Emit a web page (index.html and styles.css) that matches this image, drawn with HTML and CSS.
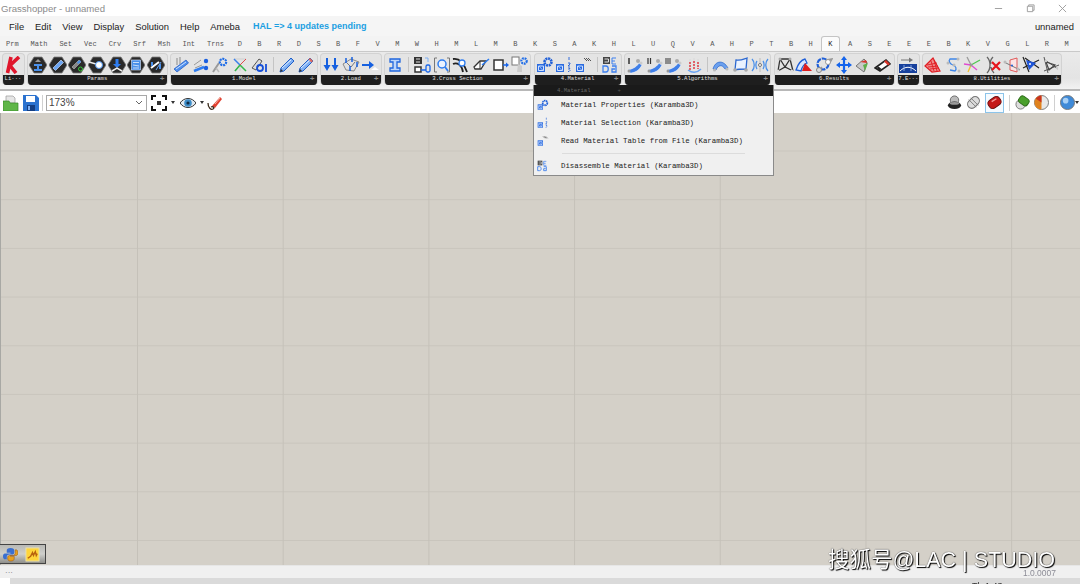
FILE: index.html
```html
<!DOCTYPE html>
<html lang="en">
<head>
<meta charset="utf-8">
<title>Grasshopper - unnamed</title>
<link rel="stylesheet" href="styles.css">
</head>
<body>
<svg class="defs" aria-hidden="true">
  <symbol id="hex" viewBox="0 0 18 18"><polygon points="5,1 13,1 18,9 13,17 5,17 0,9" fill="#2a2a2a" stroke="#808080" stroke-width=".8"/></symbol>
  <symbol id="bar" viewBox="0 0 18 18"><path d="M2 13 14 4l2.500 3L5 16z" fill="#4f90ee" stroke="#1c56c0" stroke-width=".7"/><path d="M4 13 14 6" stroke="#cfe2ff"/></symbol>
  <symbol id="cube" viewBox="0 0 18 18"><rect x="1" y="8" width="8" height="8" fill="#2b6ce0"/><path d="M2.500 10h5v4.500h-5z" fill="none" stroke="#cfe0ff"/><path d="m3 10 4 4.500" stroke="#cfe0ff" stroke-width=".7"/></symbol>
  <symbol id="pencil" viewBox="0 0 18 18"><path d="M2 16l1-4L13 2l3 3L6 15z" fill="#7fb0f4" stroke="#1f5fc8"/><path d="M4 12 13 4" stroke="#e3efff"/><path d="M2 16l1-3 2 2z" fill="#333"/></symbol>
  <symbol id="alg" viewBox="0 0 18 18"><path d="M2 14c3-1 8-2 11-7l3 2c-3 6-8 8-12 8z" fill="#3f7fe8" stroke="#fff" stroke-width=".5"/><circle cx="12" cy="5" r="2" fill="#aaa"/><circle cx="15" cy="7" r="1.500" fill="#ccc"/><circle cx="3" cy="15" r="1.500" fill="#999"/></symbol>
</svg>

<div class="app">
  <header class="titlebar">
    <span class="title">Grasshopper - unnamed</span>
    <div class="winctl">
      <svg class="winbtn" viewBox="0 0 10 10"><path d="M1 5h8" stroke="#999"/></svg>
      <svg class="winbtn" viewBox="0 0 10 10"><path d="M1.500 2.500h6v6h-6zM3 2.500V1h6v6H7.500" fill="none" stroke="#999"/></svg>
      <svg class="winbtn" viewBox="0 0 10 10"><path d="M1 1l8 8M9 1 1 9" stroke="#999"/></svg>
    </div>
  </header>

  <nav class="menubar">
    <span>File</span><span>Edit</span><span>View</span><span>Display</span><span>Solution</span><span>Help</span><span>Ameba</span>
    <span class="hal">HAL =&gt; 4 updates pending</span>
    <span class="docname">unnamed</span>
  </nav>

  <div class="tabs">
    <span class="tab">Prm</span><span class="tab">Math</span><span class="tab">Set</span><span class="tab">Vec</span><span class="tab">Crv</span><span class="tab">Srf</span><span class="tab">Msh</span><span class="tab">Int</span><span class="tab">Trns</span>
    <span class="tab s">D</span><span class="tab s">B</span><span class="tab s">R</span><span class="tab s">D</span><span class="tab s">S</span><span class="tab s">B</span><span class="tab s">F</span><span class="tab s">V</span><span class="tab s">M</span><span class="tab s">W</span><span class="tab s">H</span><span class="tab s">M</span><span class="tab s">L</span><span class="tab s">M</span><span class="tab s">B</span><span class="tab s">K</span><span class="tab s">S</span><span class="tab s">A</span><span class="tab s">K</span><span class="tab s">H</span><span class="tab s">L</span><span class="tab s">U</span><span class="tab s">Q</span><span class="tab s">V</span><span class="tab s">A</span><span class="tab s">H</span><span class="tab s">P</span><span class="tab s">T</span><span class="tab s">B</span><span class="tab s">H</span>
    <span class="tab s active">K</span>
    <span class="tab s">A</span><span class="tab s">S</span><span class="tab s">E</span><span class="tab s">E</span><span class="tab s">E</span><span class="tab s">B</span><span class="tab s">K</span><span class="tab s">V</span><span class="tab s">G</span><span class="tab s">L</span><span class="tab s">R</span><span class="tab s">M</span>
  </div>

  <div class="ribbon">
    <section class="grp g-li">
      <div class="tools">
        <svg class="ic" viewBox="0 0 18 18"><path d="M7 1 3.500 17M15 1 6 9.500 12 17" fill="none" stroke="#e0162c" stroke-width="3.600"/></svg>
      </div>
      <div class="cap">Li···</div>
    </section>

    <section class="grp g-params">
      <div class="tools">
        <svg class="ic" viewBox="0 0 18 18"><use href="#hex"/><path d="M5 8h8v2h-3v3h3v2H5v-2h3v-3H5z" fill="#4a90ea"/><path d="m6 6 3-3 3 3z" fill="#999"/></svg>
        <svg class="ic" viewBox="0 0 18 18"><use href="#hex"/><path d="M4 12 12 4l2.500 2.500-8 8z" fill="#6aa4f2" stroke="#dbe9ff" stroke-width=".6"/></svg>
        <svg class="ic" viewBox="0 0 18 18"><use href="#hex"/><path d="M4 11 11 4l2 2-7 7z" fill="#888" stroke="#ccc" stroke-width=".5"/><path d="M9 6l3-2 1 2-3 2z" fill="#4a90ea"/><circle cx="12.500" cy="13" r="2" fill="none" stroke="#36c936"/></svg>
        <svg class="ic" viewBox="0 0 18 18"><use href="#hex"/><path d="M1 6l7 2" stroke="#eee" stroke-width="1.500"/><circle cx="11" cy="9" r="3.500" fill="#fff" stroke="#4a90ea"/></svg>
        <svg class="ic" viewBox="0 0 18 18"><use href="#hex"/><path d="M7.500 3h3v5H13l-4 4-4-4h2.500z" fill="#2f7df0"/><path d="m4 15 5-3 5 3" fill="none" stroke="#eee" stroke-width="1.500"/></svg>
        <svg class="ic" viewBox="0 0 18 18"><use href="#hex"/><rect x="4.500" y="4" width="9" height="10" fill="#4a90ea" stroke="#dce9ff" stroke-width=".6"/><path d="M6 6.500h6M6 9l6 1M6 12h6" stroke="#fff" stroke-width=".7"/></svg>
        <svg class="ic" viewBox="0 0 18 18"><use href="#hex"/><path d="M4 12 12 6" stroke="#fff" stroke-width="2"/><path d="M5 6v4M13 8v5" stroke="#4a90ea" stroke-width="2"/><path d="M9 14l5-8" stroke="#6aa4f2"/></svg>
      </div>
      <div class="cap">Params<span class="plus">+</span></div>
    </section>

    <section class="grp g-wide">
      <div class="tools">
        <svg class="ic" viewBox="0 0 18 18"><use href="#bar"/><path d="M5 2v7M8 1v7" stroke="#9a9a9a" stroke-width="1.200"/></svg>
        <svg class="ic" viewBox="0 0 18 18"><path d="M2 15 12 11" stroke="#2f7df0" stroke-width="2.500"/><path d="M2 9l7-5M3 12l7-3" stroke="#999"/><circle cx="14" cy="5" r="2.200" fill="#1a5fe0"/><circle cx="14" cy="12" r="2.200" fill="#1a5fe0"/></svg>
        <svg class="ic" viewBox="0 0 18 18"><path d="M2 16 8 7" stroke="#999" stroke-width="2"/><path d="M5 12l3 4" stroke="#bbb" stroke-width="1.500"/><circle cx="12" cy="6" r="3.200" fill="none" stroke="#1f6de8" stroke-width="2.200" stroke-dasharray="2 .8"/></svg>
        <svg class="ic" viewBox="0 0 18 18"><path d="M3 3h12M3 3l6 6 6-6M9 9v6M9 9l-6 6M9 9l6 6" fill="none" stroke="#cfcfcf"/><path d="M3 3l6 6" stroke="#3a80ea" stroke-width="1.500"/><path d="M9 9l-5 6M9 9l6 6" stroke="#35b84a" stroke-width="1.500"/><path d="M9 9 15 3" stroke="#e04b4b"/></svg>
        <svg class="ic" viewBox="0 0 18 18"><path d="M1 12 8 3l3 2-6 9z" fill="#ddd" stroke="#555"/><circle cx="9" cy="12" r="3" fill="none" stroke="#1750d8" stroke-width="1.800"/><path d="M15 8v8" stroke="#1750d8" stroke-width="1.800"/></svg>
        <i class="sep"></i>
        <svg class="ic" viewBox="0 0 18 18"><use href="#pencil"/></svg>
        <svg class="ic" viewBox="0 0 18 18"><use href="#pencil"/><path d="M13 2l3 3-1.500 1.500-3-3z" fill="#e56a5a"/></svg>
      </div>
      <div class="cap">1.Model<span class="plus">+</span></div>
    </section>

    <section class="grp g-load">
      <div class="tools">
        <svg class="ic" viewBox="0 0 18 18"><path d="M5 2v8M13 2v8" stroke="#1660e0" stroke-width="2"/><path d="M1.500 9h7L5 15zM9.500 9h7L13 15z" fill="#1660e0"/></svg>
        <svg class="ic" viewBox="0 0 18 18"><path d="M1 8l8-5 8 3-5 9-8-1z" fill="#e2e2e2" stroke="#888"/><path d="M5 7l4 4 4-5" fill="none" stroke="#777"/><path d="M4 2v5M10 1v5M15 6v5M8 10v5" stroke="#1660e0" stroke-width="1.500"/></svg>
        <svg class="ic" viewBox="0 0 18 18"><path d="M1 9h8" stroke="#1660e0" stroke-width="2"/><path d="M8 5l5 4-5 4z" fill="#1660e0"/><path d="M10 14l4-3 4 3z" fill="#fff"/></svg>
      </div>
      <div class="cap">2.Load<span class="plus">+</span></div>
    </section>

    <section class="grp g-wide2">
      <div class="tools">
        <svg class="ic" viewBox="0 0 18 18"><path d="M4 3h10v3h-3v6h3v3H4v-3h3V6H4z" fill="#bcd6fb" stroke="#1f66dd" stroke-width="1.300"/></svg>
        <i class="sep"></i>
        <svg class="ic" viewBox="0 0 18 18"><rect x="1" y="1" width="8" height="7" fill="#333"/><path d="M3 3h4M3 6h4" stroke="#ddd"/><rect x="2" y="11" width="6" height="5" fill="#fff" stroke="#333" stroke-width="1.500"/><path d="M8 14h5" stroke="#1a66e8" stroke-width="1.500"/><rect x="13" y="9" width="4" height="7" rx="1.500" fill="none" stroke="#1a66e8" stroke-width="1.300"/><path d="M12 2h3v4" fill="none" stroke="#7fb0f4"/></svg>
        <svg class="ic" viewBox="0 0 18 18"><path d="M4 2H1.500v14H4M14 2h2.500v14H14" fill="none" stroke="#777"/><circle cx="9" cy="8" r="4" fill="#eaf2ff" stroke="#2f7df0" stroke-width="1.500"/><path d="m12 11 3 4" stroke="#2f7df0" stroke-width="1.800"/></svg>
        <svg class="ic" viewBox="0 0 18 18"><path d="M1 3c5-1 10 2 14 13M1 8c4-2 9 1 10 8" fill="none" stroke="#222" stroke-width="1.800"/><circle cx="10" cy="7" r="3" fill="#fff" stroke="#2f7df0" stroke-width="1.300"/></svg>
        <svg class="ic" viewBox="0 0 18 18"><path d="M2 11 8 5h6l-5 8H3z" fill="#fff" stroke="#333" stroke-width="1.300"/><path d="M8 5v8" stroke="#333"/><path d="m10 9 7-6" stroke="#2f7df0" stroke-width="1.600"/></svg>
        <svg class="ic" viewBox="0 0 18 18"><rect x="2" y="4" width="9" height="10" fill="#fff" stroke="#333" stroke-width="1.500"/><path d="M11 9h4" stroke="#1a66e8" stroke-width="1.500"/><path d="M14 6.500 17 9l-3 2.500z" fill="#1a66e8"/></svg>
        <svg class="ic" viewBox="0 0 18 18"><rect x="1" y="1" width="7" height="8" fill="#fff" stroke="#777"/><path d="M7 8l4 2v6H6z" fill="#ccc"/><circle cx="13" cy="5" r="2.700" fill="none" stroke="#1f6de8" stroke-width="2.200" stroke-dasharray="1.800 .8"/></svg>
      </div>
      <div class="cap">3.Cross Section<span class="plus">+</span></div>
    </section>

    <section class="grp g-mat">
      <div class="tools">
        <svg class="ic" viewBox="0 0 18 18"><use href="#cube"/><circle cx="12" cy="6" r="3.500" fill="none" stroke="#1f5fd8" stroke-width="2.600" stroke-dasharray="2 .7"/></svg>
        <svg class="ic" viewBox="0 0 18 18"><use href="#cube"/><path d="M14 1v3M13 7h2v1l-2 2h2M13 12h2l-1 1.500 1 1-1 1h-1" fill="none" stroke="#1f5fd8" stroke-width=".9"/></svg>
        <svg class="ic" viewBox="0 0 18 18"><use href="#cube"/><path d="m9 2 3 3M11 2l3 3M13 2l3 3" stroke="#555"/></svg>
        <i class="sep"></i>
        <svg class="ic" viewBox="0 0 18 18"><rect x="1" y="1" width="7" height="7" fill="#444"/><path d="M2.500 3h4v3h-4" fill="none" stroke="#ddd"/><path d="M10 2v6M10 2h4M10 5h3M10 8h4" fill="none" stroke="#3e80ee"/><path d="M1 10h3c3 0 3 6 0 6H1zM10 10h4v6h-4v-3h3" fill="none" stroke="#3e80ee" stroke-width="1.300"/></svg>
      </div>
      <div class="cap">4.Material<span class="plus">+</span></div>
    </section>

    <section class="grp g-wide2">
      <div class="tools">
        <svg class="ic" viewBox="0 0 18 18"><use href="#alg"/><path d="M3 2v6" stroke="#333" stroke-width="1.500"/></svg>
        <svg class="ic" viewBox="0 0 18 18"><use href="#alg"/><path d="M2 2v6M4.500 2v6" stroke="#333" stroke-width="1.200"/></svg>
        <svg class="ic" viewBox="0 0 18 18"><use href="#alg"/><path d="M1 2v6M3 2v6M5 2v6" stroke="#333"/></svg>
        <svg class="ic" viewBox="0 0 18 18"><path d="M3 14c4 3 9 3 13-1" fill="none" stroke="#6aa4f2" stroke-width="1.500"/><path d="M5 3v9M9 2v9M13 3v9" stroke="#ddd" stroke-width="1.500"/><path d="M5 6v8M9 5v8M13 6v7" stroke="#e0202a" stroke-width="1.300" stroke-dasharray="2 1"/></svg>
        <i class="sep"></i>
        <svg class="ic" viewBox="0 0 18 18"><path d="M1 13C3 5 11 3 16 12l-3 1C10 8 6 9 4 14z" fill="#6ba0ee" stroke="#2461c9" stroke-width=".7"/><circle cx="2.500" cy="14" r="1.500" fill="#bbb"/><circle cx="15" cy="13" r="1.500" fill="#bbb"/></svg>
        <svg class="ic" viewBox="0 0 18 18"><path d="M4 4c4 1 8-1 11-2l-1 11c-3 0-8 0-11 1z" fill="#eaf2ff" stroke="#2c68d0" stroke-width="1.300"/><circle cx="3" cy="14" r="1.800" fill="#aaa"/><circle cx="14" cy="14" r="1.800" fill="#aaa"/></svg>
        <svg class="ic" viewBox="0 0 18 18"><path d="M1 3c3 3 3 9 0 12M17 3c-3 3-3 9 0 12M6 5c-1.500 2-1.500 6 0 8M12 5c1.500 2 1.500 6 0 8" fill="none" stroke="#4a90ea" stroke-width="1.300"/><path d="M9 2v14" stroke="#bbb"/><circle cx="9" cy="9" r="1.500" fill="#fff" stroke="#777"/></svg>
      </div>
      <div class="cap">5.Algorithms<span class="plus">+</span></div>
    </section>

    <section class="grp g-res">
      <div class="tools">
        <svg class="ic" viewBox="0 0 18 18"><path d="M4 3h10M4 3l-2 12M14 3l3 12M4 3l5 8 5-8M2 15l7-4 8 4" fill="none" stroke="#333" stroke-width="1.300"/><circle cx="4" cy="3" r="1.500" fill="#aaa"/><circle cx="14" cy="3" r="1.500" fill="#aaa"/><circle cx="2" cy="15" r="1.500" fill="#ddd"/><circle cx="16" cy="15" r="1.500" fill="#ddd"/></svg>
        <svg class="ic" viewBox="0 0 18 18"><path d="M1 14C3 8 6 4 10 3l2 4c-3 1-5 4-6 8z" fill="#d8e7ff" stroke="#1f5fd8" stroke-width="1.300"/><path d="M10 7l7 8H7z" fill="#e01e1e"/></svg>
        <svg class="ic" viewBox="0 0 18 18"><circle cx="8" cy="8" r="5.500" fill="none" stroke="#1f5fd8" stroke-width="2.200" stroke-dasharray="5 1"/><path d="m11 4 6-1-3 5M3 15l4-4" stroke="#999" stroke-width="1.500" fill="none"/><circle cx="13" cy="6" r="2.500" fill="#fff" stroke="#999"/><circle cx="4" cy="14" r="2.500" fill="#ddd" stroke="#888"/></svg>
        <svg class="ic" viewBox="0 0 18 18"><path d="M9 3v12M3 9h12" stroke="#1464ec" stroke-width="2.200"/><path d="M9 0l3 4H6zM9 18l3-4H6zM1 9l4-3v6zM17 9l-4-3v6z" fill="#1464ec"/></svg>
        <svg class="ic" viewBox="0 0 18 18"><path d="M2 10l8-7 3 3-3 10z" fill="#c9c9c9" stroke="#777"/><path d="M9 9l5-2-3 8z" fill="#5eb04a"/><path d="M6 6l6-2 1 3z" fill="#d9362c"/></svg>
        <svg class="ic" viewBox="0 0 18 18"><path d="M1 12 12 4l4 4-10 7z" fill="#fff" stroke="#222" stroke-width="1.600"/><path d="M2.500 12l3 2.500 2-1.500-3-2.500z" fill="#222"/><path d="M12 4l4 4-2 1.500-4-4z" fill="#d9362c"/></svg>
      </div>
      <div class="cap">6.Results<span class="plus">+</span></div>
    </section>

    <section class="grp g-e">
      <div class="tools">
        <svg class="ic" viewBox="0 0 18 18"><path d="M2 4h10" stroke="#777"/><path d="M10 1.500 14 4l-4 2.500z" fill="#777"/><rect x="0" y="8" width="18" height="9" fill="#17409c"/><path d="M1 15c5-5 11-5 16 0" fill="none" stroke="#fff"/><path d="M5 9v6M12 9v6" stroke="#9ab8ee" stroke-width=".8"/></svg>
      </div>
      <div class="cap">7.E···</div>
    </section>

    <section class="grp g-util">
      <div class="tools">
        <svg class="ic" viewBox="0 0 18 18"><path d="M1 10 9 2l7 13-8 1z" fill="#f08a8a" stroke="#e01e24" stroke-width="1.200"/><path d="M3 9l10-2M4 11l10-1M6 13l9-1M7 5l3 10M10 4l3 11" stroke="#e01e24" stroke-width=".9"/></svg>
        <svg class="ic" viewBox="0 0 18 18"><path d="M14 3H6c-2 2 0 5 3 6 3 1 4 4 2 6L6 14" fill="none" stroke="#3f86e8" stroke-width="1.300"/><circle cx="14" cy="3" r="1.500" fill="#bbb"/><circle cx="4" cy="7" r="1.500" fill="#bbb"/><circle cx="10" cy="9" r="1.500" fill="#bbb"/><circle cx="15" cy="15" r="1.500" fill="#bbb"/></svg>
        <svg class="ic" viewBox="0 0 18 18"><path d="M8 9 4 1" stroke="#999" stroke-width="1.300"/><path d="M8 9l9-5" stroke="#4ec850" stroke-width="1.300"/><path d="M8 9l6 5" stroke="#e04bd0" stroke-width="1.300"/><path d="M8 9 1 8" stroke="#e04bd0" stroke-width="1.300"/><path d="M8 9l-3 7" stroke="#f0c030" stroke-width="1.300"/><circle cx="8" cy="9" r="1.500" fill="#999"/></svg>
        <svg class="ic" viewBox="0 0 18 18"><path d="M4 1c4 4 4 12 0 16M10 1c-3 3-3 5-2 7M8 11c0 2 1 4 3 6" fill="none" stroke="#666" stroke-width="1.300"/><path d="m9 6 8 8m0-8-8 8" stroke="#e6141c" stroke-width="2.200"/></svg>
        <svg class="ic" viewBox="0 0 18 18"><path d="M7 4l7-2v14l-7-2z" fill="#fbe4e4" stroke="#e05a5a"/><path d="M1 6l16 8" stroke="#777"/><circle cx="2" cy="6" r="1.500" fill="#bbb"/><circle cx="15" cy="13" r="1.500" fill="#bbb"/><circle cx="9" cy="9.500" r="1" fill="#1f5fd8"/></svg>
        <svg class="ic" viewBox="0 0 18 18"><path d="M1 1l6 15M17 4 1 12M3 2l14 10" stroke="#222" stroke-width="1.200"/><path d="M4 4l10 3-7 7z" fill="#1f55d8"/><circle cx="8" cy="8" r="1" fill="#fff"/></svg>
        <svg class="ic" viewBox="0 0 18 18"><path d="M2 1l4 16M2 15l15-6M3 4l13 9" stroke="#555" stroke-width="1"/><path d="M4 6l9 3-6 5z" fill="none" stroke="#444" stroke-width="1.200"/><circle cx="4" cy="5" r="1.200" fill="#ccc"/><circle cx="15" cy="12" r="1.200" fill="#ccc"/></svg>
      </div>
      <div class="cap">8.Utilities<span class="plus">+</span></div>
    </section>
  </div>

  <div class="toolbar">
    <svg class="tb" viewBox="0 0 16 16"><path d="M3 1h7l2 2v5H3z" fill="#e6e6e6" stroke="#999" stroke-width=".7"/><path d="M0 6h6l1 2h8v8H0z" fill="#5fb648" stroke="#3b8a2c" stroke-width=".7"/></svg>
    <svg class="tb" viewBox="0 0 16 16"><path d="M0 0h13l3 3v13H0z" fill="#2b72cf"/><rect x="3" y="1" width="9" height="6" fill="#fff"/><rect x="4" y="10" width="8" height="6" fill="#143e82"/><rect x="5" y="11" width="2" height="4" fill="#7fb0f4"/></svg>
    <i class="tsep"></i>
    <div class="combo"><span>173%</span>
      <svg class="chev" viewBox="0 0 8 5"><path d="m1 1 3 3 3-3" fill="none" stroke="#666"/></svg>
    </div>
    <svg class="tb cap-ic" viewBox="0 0 16 16"><path d="M1 5V1h4M11 1h4v4M15 11v4h-4M5 15H1v-4" fill="none" stroke="#111" stroke-width="2"/><rect x="6" y="6" width="4" height="4" fill="#333"/></svg>
    <i class="drop"></i>
    <svg class="tb eye" viewBox="0 0 16 16"><path d="M0 8c4-6 12-6 16 0-4 6-12 6-16 0z" fill="#dfe8f0" stroke="#333"/><circle cx="8" cy="8" r="3.800" fill="#3c8cc8"/><circle cx="8" cy="8" r="1.600" fill="#102a44"/></svg>
    <i class="drop"></i>
    <svg class="tb pen" viewBox="0 0 16 16"><path d="M5 11 13 2l2 2-7 9z" fill="#e04030"/><path d="M8 9l5-6" stroke="#f6b0a0"/><path d="M1 8c0 5 3 7 5 6 2-1 0-3-2-2" fill="none" stroke="#3a2a1a" stroke-width="1.300"/></svg>
    <div class="tright">
      <svg class="tb" viewBox="0 0 16 16"><ellipse cx="8" cy="5.500" rx="4.500" ry="4.500" fill="#bbb" stroke="#666"/><ellipse cx="8" cy="11" rx="7" ry="4" fill="#222"/><ellipse cx="8" cy="9" rx="5" ry="1.500" fill="#999"/></svg>
      <svg class="tb" viewBox="0 0 16 16"><rect x="1" y="3.500" width="14" height="9" rx="4.500" transform="rotate(-45 8 8)" fill="#ddd" stroke="#777" stroke-width="1.200"/><path d="M5 3l8 8M3 5l8 8" stroke="#777"/></svg>
      <span class="selected"><svg class="tb" viewBox="0 0 16 16"><rect x="1" y="3" width="14" height="10" rx="4" transform="rotate(-35 8 8)" fill="#c41a1a" stroke="#611"/><path d="M5 7l5-3" stroke="#f59a9a" stroke-width="1.500"/></svg></span>
      <i class="tsep"></i>
      <svg class="tb" viewBox="0 0 16 16"><circle cx="6" cy="10" r="5" fill="#ddd" stroke="#777"/><rect x="4" y="2" width="11" height="8" rx="3" transform="rotate(35 9 6)" fill="#4aa02c" stroke="#2c6b18"/></svg>
      <svg class="tb" viewBox="0 0 16 16"><circle cx="8" cy="8" r="7.500" fill="#e8e8e8" stroke="#777"/><path d="M8 .5A7.500 7.500 0 0 0 8 15.500z" fill="#e0821e"/><path d="M8 .5A7.500 7.500 0 0 0 2 4l6 4z" fill="#c8321e"/></svg>
      <i class="tsep"></i>
      <svg class="tb" viewBox="0 0 16 16"><circle cx="8" cy="8" r="7.500" fill="#3f8ad8" stroke="#777"/><circle cx="6" cy="6" r="3" fill="#a8d0f6"/></svg>
      <i class="drop"></i>
    </div>
  </div>

  <main class="canvas">
    <div class="scripts">
      <svg class="sc" viewBox="0 0 16 16"><path d="M8 1c-3 0-4 1-4 3v2h4v1H2C1 7 0 8 0 10s1 3 2 3h2v-2c0-2 1-3 3-3h3c1 0 2-1 2-2V4c0-2-1-3-4-3z" fill="#3a6fd0"/><path d="M8 15c3 0 4-1 4-3v-2H8V9h6c1 0 2-1 2-3s-1-3-2-3h-1v3c0 2-1 3-3 3H7c-1 0-2 1-2 2v1c0 2 1 3 3 3z" fill="#e8a01e" stroke="#8a4a10" stroke-width=".5"/></svg>
      <svg class="sc" viewBox="0 0 16 16"><rect x="1" y="1" width="14" height="14" fill="#ffd53a" stroke="#e8e0b0"/><path d="M3 12l3-2 2-4 1 3 2-4 1 4 1-2" fill="none" stroke="#b8620e" stroke-width="1.500"/></svg>
    </div>
  </main>

  <div class="status">···</div>
  <div class="strip"><span>Th 1:43</span></div>

  <div class="popup">
    <div class="pop-head"><span>4.Material</span><span class="pop-plus">+</span></div>
    <div class="pop-item">
      <svg class="pi" viewBox="0 0 18 18"><use href="#cube"/><circle cx="12" cy="6" r="3.500" fill="none" stroke="#1f5fd8" stroke-width="2.600" stroke-dasharray="2 .7"/></svg>
      <span>Material Properties (Karamba3D)</span>
    </div>
    <div class="pop-item">
      <svg class="pi" viewBox="0 0 18 18"><use href="#cube"/><path d="M14 1v3M13 7h2v1l-2 2h2M13 12h2l-1 1.500 1 1-1 1h-1" fill="none" stroke="#1f5fd8" stroke-width=".9"/></svg>
      <span>Material Selection (Karamba3D)</span>
    </div>
    <div class="pop-item">
      <svg class="pi" viewBox="0 0 18 18"><use href="#cube"/><path d="m9 2 3 3M11 2l3 3M13 2l3 3" stroke="#555"/></svg>
      <span>Read Material Table from File (Karamba3D)</span>
    </div>
    <div class="pop-sep"></div>
    <div class="pop-item">
      <svg class="pi" viewBox="0 0 18 18"><rect x="1" y="1" width="7" height="7" fill="#444"/><path d="M2.500 3h4v3h-4" fill="none" stroke="#ddd"/><path d="M10 2v6M10 2h4M10 5h3M10 8h4" fill="none" stroke="#3e80ee"/><path d="M1 10h3c3 0 3 6 0 6H1zM10 10h4v6h-4v-3h3" fill="none" stroke="#3e80ee" stroke-width="1.300"/></svg>
      <span>Disassemble Material (Karamba3D)</span>
    </div>
  </div>

  <div class="version">1.0.0007</div>
</div>
<div class="watermark">搜狐号@LAC | STUDIO</div>
</body>
</html>
```
FILE: styles.css
```css
* { box-sizing: border-box; }
html, body { margin: 0; height: 100%; overflow: hidden; background: #fff; }
body { position: relative; font-family: "Liberation Sans", "Noto Sans", sans-serif; }
.defs { position: absolute; width: 0; height: 0; }

.app {
  position: relative;
  width: 1080px;
  height: 584px;
  display: flex;
  flex-direction: column;
  overflow: hidden;
  filter: blur(.45px);
}

/* title bar */
.titlebar {
  height: 16px;
  flex: none;
  display: flex;
  align-items: center;
  justify-content: space-between;
  background: #fff;
  padding-left: 1px;
}
.title { font-size: 9.6px; color: #8c8c8c; }
.winctl { display: flex; align-items: center; gap: 23px; padding-right: 13px; }
.winbtn { width: 9px; height: 9px; }

/* menu */
.menubar {
  height: 20px;
  flex: none;
  display: flex;
  align-items: center;
  gap: 11px;
  padding: 0 6px 0 9px;
  background: #f5f5f5;
  font-size: 9.4px;
  color: #222;
}
.hal { margin-left: 2px; color: #1c9fe2; font-size: 9px; font-weight: 700; }
.docname { margin-left: auto; }

/* tabs */
.tabs {
  height: 15px;
  flex: none;
  display: flex;
  background: #f3f3f3;
  font-family: "Liberation Mono", monospace;
  font-size: 7px;
  color: #555;
}
.tab { padding: 0 6px; line-height: 16px; }
.tab.s { width: 19.7px; padding: 0; text-align: center; }
.tab.active {
  background: #fbfbfb;
  border: 1px solid #c4c4c4;
  border-bottom: 0;
  border-radius: 3px 3px 0 0;
  color: #222;
  line-height: 14px;
}

/* ribbon */
.ribbon {
  height: 40px;
  flex: none;
  display: flex;
  gap: 2.5px;
  padding: 1px 0 0 1.5px;
  background: linear-gradient(#eaeaea, #e4e4e4 70%, #f2f2f2);
  border-top: 1px solid #c9c9c9;
  border-bottom: 2px solid #b8b8b8;
}
.grp {
  height: 32px;
  flex: none;
  display: flex;
  flex-direction: column;
  background: #e4e4e4;
  border: 1px solid #d2d2d2;
  border-bottom: 0;
  border-radius: 4px;
  overflow: hidden;
}
.g-li { width: 23px; }
.g-params { width: 140.5px; }
.g-wide { width: 147.5px; }
.g-load { width: 61.5px; }
.g-wide2 { width: 147px; }
.g-mat { width: 88px; }
.g-res { width: 121px; }
.g-e { width: 22.5px; }
.g-util { width: 140px; }
.tools {
  height: 21px;
  flex: none;
  display: flex;
  align-items: center;
  padding-left: .5px;
}
.ic { width: 18px; height: 18px; margin: 0 .8px; flex: none; }
.sep { width: 1px; height: 15px; margin: 0 3.2px; background: #c4c4c4; flex: none; }
.cap {
  position: relative;
  flex: 1;
  background: #1e1e1e;
  color: #e2e2e2;
  font-family: "Liberation Mono", monospace;
  font-size: 5.6px;
  line-height: 8px;
  text-align: center;
  white-space: nowrap;
}
.plus { position: absolute; right: 2px; top: 0; color: #888; font-weight: 700; font-size: 8px; }

/* toolbar */
.toolbar {
  height: 22px;
  flex: none;
  display: flex;
  align-items: center;
  padding: 1px 1px 0 3px;
  background: #fff;
}
.tb { width: 16px; height: 16px; flex: none; }
.tb + .tb { margin-left: 4px; }
.tsep { width: 1px; height: 16px; margin: 0 3px; background: #d0d0d0; flex: none; }
.combo {
  width: 101px;
  height: 16px;
  flex: none;
  display: flex;
  align-items: center;
  justify-content: space-between;
  padding: 0 3px 0 2px;
  border: 1px solid #a8a8a8;
  font-size: 10px;
  color: #444;
}
.chev { width: 8px; height: 5px; }
.cap-ic { margin-left: 4px; }
.drop {
  width: 0; height: 0; margin: 0 5px 0 4px; flex: none;
  border: 2px solid transparent;
  border-top: 3px solid #333;
  border-bottom: 0;
}
.eye { margin-left: 0; }
.pen { margin-left: -2px; }
.tright { margin-left: auto; display: flex; align-items: center; gap: 4px; }
.tright .tb { width: 15px; height: 15px; }
.tright .tb + .tb { margin-left: 0; }
.tright .tsep { margin: 0 1px; }
.tright .drop { margin: 0 0 0 -4px; }
.selected {
  display: flex;
  align-items: center;
  justify-content: center;
  width: 19px;
  height: 20px;
  background: #f6fbff;
  border: 1px solid #8cc4ea;
}

/* canvas */
.canvas {
  position: relative;
  flex: 1;
  background-color: #d4d0c8;
  background-image:
    linear-gradient(90deg, #c5c1b9 1px, transparent 1px),
    linear-gradient(#c9c5bd 1px, transparent 1px);
  background-size: 145.7px 100%, 100% 48.7px;
  background-position: 136px 0, 0 37.5px;
  border-left: 1px solid #a8a8a4;
}
.scripts {
  position: absolute;
  left: -1px;
  bottom: 1px;
  width: 46px;
  height: 20px;
  display: flex;
  align-items: center;
  gap: 7px;
  padding-left: 3px;
  background: linear-gradient(#b9b9b5, #cfcfcb 50%, #8f8f8b);
  border: 1px solid #444;
  border-left: 0;
}
.sc { width: 15px; height: 15px; flex: none; }

/* status */
.status {
  height: 13px;
  flex: none;
  padding-left: 5px;
  background: #f0f0f0;
  border-top: 1px solid #e6e6e6;
  font-size: 8px;
  line-height: 13px;
  color: #777;
}
.strip {
  height: 6px;
  flex: none;
  margin-left: 10px;
  background: #dadada;
  overflow: hidden;
  font-size: 9px;
  line-height: 11px;
  color: #333;
  padding-left: 962px;
  padding-top: 3px;
}

/* overlays */
.popup {
  position: absolute;
  left: 533px;
  top: 85px;
  width: 241px;
  background: #f0f0f0;
  border: 1px solid #8a8a8a;
  border-top: 0;
  font-family: "Liberation Mono", monospace;
  font-size: 7.4px;
  color: #222;
}
.pop-head {
  height: 11px;
  display: flex;
  gap: 27px;
  padding-left: 23px;
  background: #1a1a1a;
  color: #666;
  font-size: 5.6px;
  line-height: 11px;
}
.pop-plus { color: #555; }
.pop-item { height: 18px; display: flex; align-items: center; gap: 12px; padding-left: 3px; }
.pi { width: 12px; height: 14px; flex: none; }
.pop-sep { height: 7px; margin: 0 28px; background: linear-gradient(transparent 3px, #dcdcdc 3px, #dcdcdc 4px, transparent 4px); }
.version {
  position: absolute;
  right: 24px;
  top: 568px;
  font-size: 8.5px;
  color: #8c8c96;
}
.watermark {
  position: absolute;
  left: 828px;
  top: 547px;
  font-family: "Liberation Sans", "Noto Sans CJK SC", sans-serif;
  font-size: 21.5px;
  line-height: 26px;
  color: #fff;
  white-space: nowrap;
  text-shadow: 1px 1px 1px #000, 0 0 1px #000;
}
```
